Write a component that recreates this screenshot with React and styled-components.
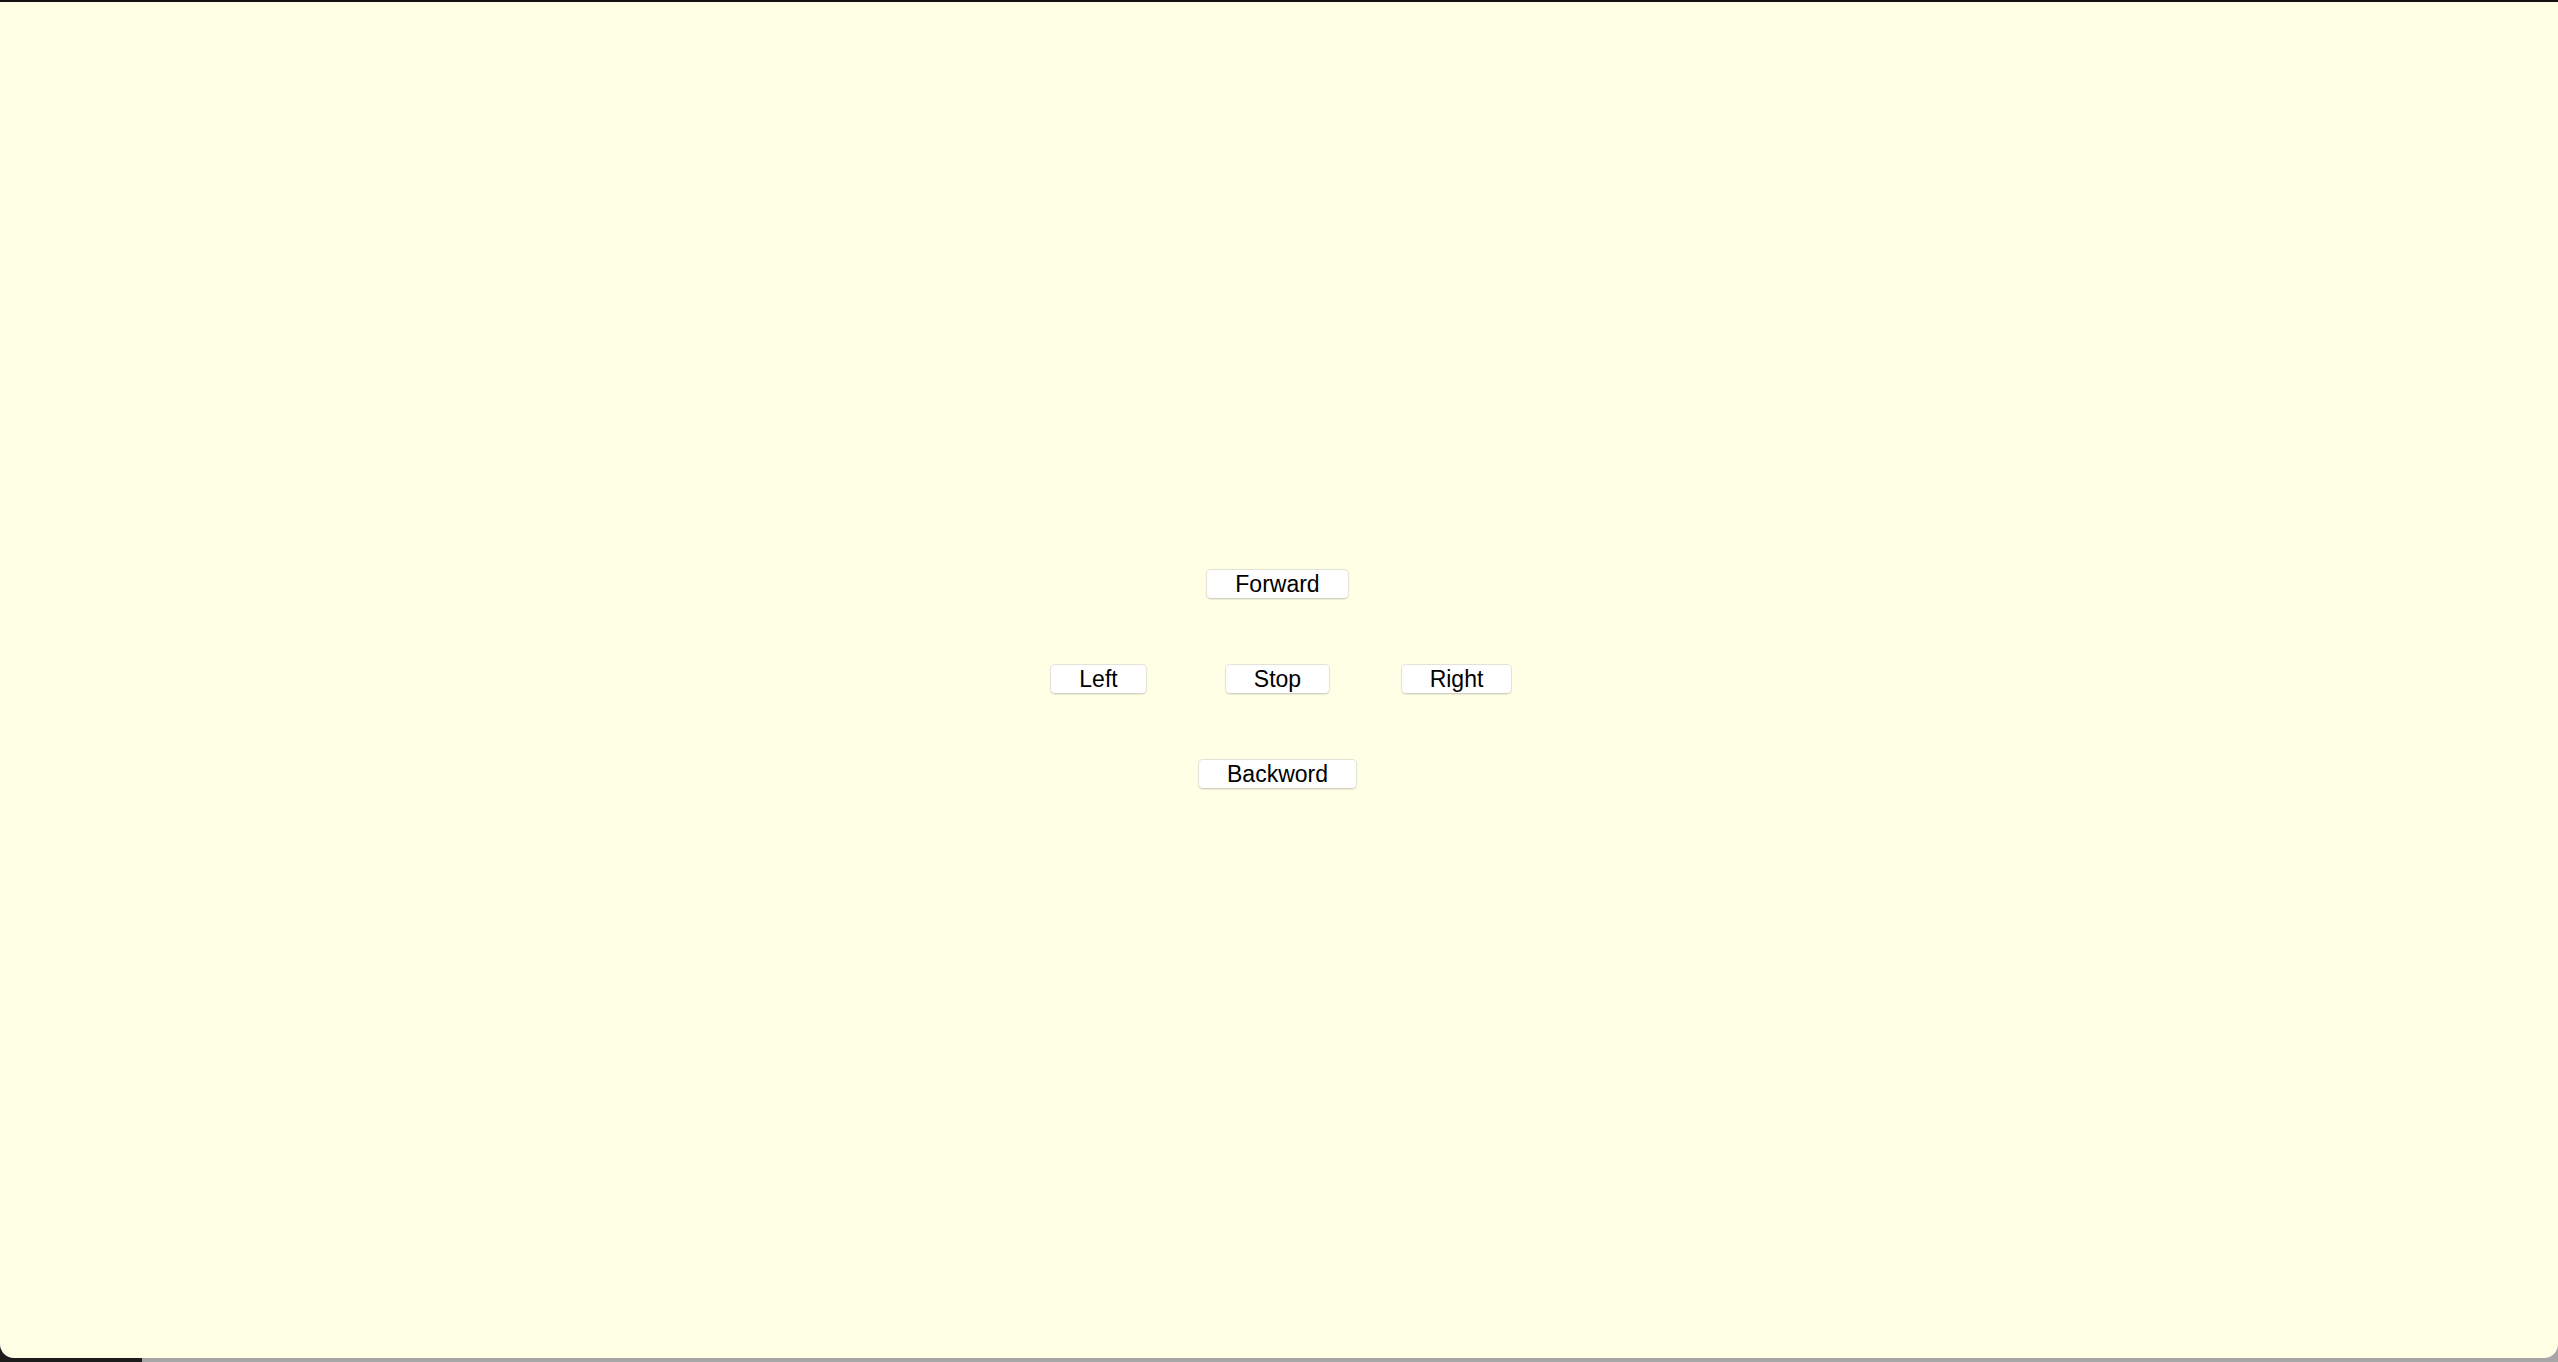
import styled, { createGlobalStyle } from 'styled-components';

const GlobalStyle = createGlobalStyle`
  html, body {
    margin: 0;
    padding: 0;
    background: #a6a6a6;
  }
  body {
    font-family: "Liberation Sans", Arial, sans-serif;
  }
`;

const Screen = styled.div`
  height: 1362px;
  display: flex;
  flex-direction: column;
  background: linear-gradient(to right, #1c1c1c 0 142px, #a6a6a6 142px);
`;

const Page = styled.main`
  flex: 1;
  border-top: 2px solid #111111;
  margin-bottom: 4px;
  background: #ffffe6;
  border-radius: 0 0 14px 14px;
  display: flex;
  flex-direction: column;
  align-items: center;
  justify-content: center;
  gap: 65px;
  padding: 0 3px 2px 0;
`;

const Row = styled.div`
  display: grid;
  grid-template-columns: repeat(3, 179px);
  justify-items: center;
`;

const Button = styled.button`
  height: 30px;
  padding: 0 28px;
  font-family: "Liberation Sans", Arial, sans-serif;
  font-size: 23px;
  color: #000000;
  background: #ffffff;
  border: 1px solid #e2e2d6;
  border-bottom-color: #d2d2c4;
  border-radius: 5px;
  box-shadow: 0 1px 1px rgba(0, 0, 0, 0.08);
  cursor: pointer;
`;

const App = () => {
  return (
    <>
      <GlobalStyle />
      <Screen>
        <Page>
          <Button>Forward</Button>
          <Row>
            <Button>Left</Button>
            <Button>Stop</Button>
            <Button>Right</Button>
          </Row>
          <Button>Backword</Button>
        </Page>
      </Screen>
    </>
  );
};

export default App;
